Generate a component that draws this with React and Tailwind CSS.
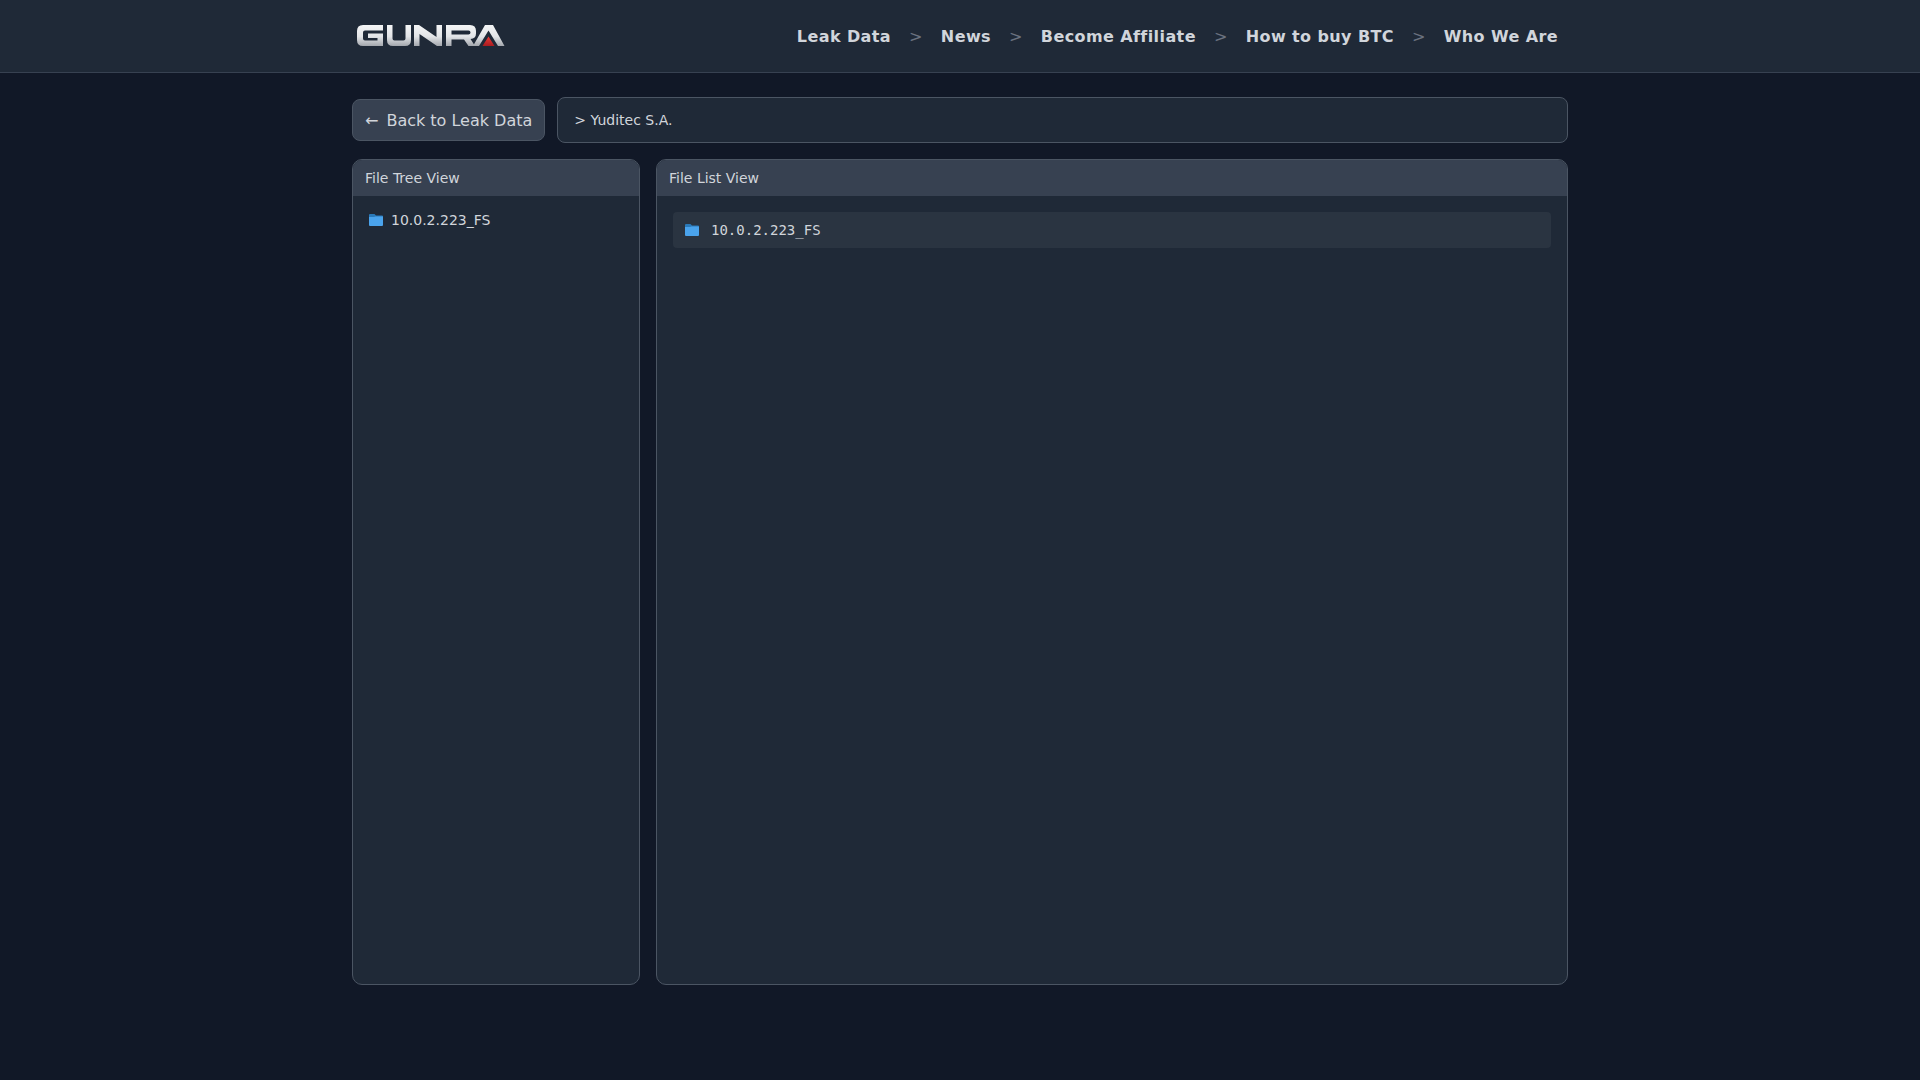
const F = "font-['DejaVu_Sans',sans-serif]";

function Logo() {
  return (
    <svg width="150" height="24" viewBox="0 0 150 24" className="block" aria-label="GUNRA">
      <defs>
        <linearGradient id="lg" x1="0" y1="0" x2="0" y2="1">
          <stop offset="0" stopColor="#f4f5f6" />
          <stop offset="0.55" stopColor="#e2e4e7" />
          <stop offset="1" stopColor="#a3a7ad" />
        </linearGradient>
        <linearGradient id="lr" x1="0" y1="0" x2="0" y2="1">
          <stop offset="0" stopColor="#ee3a36" />
          <stop offset="1" stopColor="#a81c20" />
        </linearGradient>
      </defs>
      <g fill="url(#lg)">
        <path d="M6 1H26V6.500H8Q6 6.500 6 8.500V14.500Q6 16.500 8 16.500H20.500V14H11V9.500H26V22H6Q0 22 0 16V7Q0 1 6 1Z" />
        <path d="M30 1H35.500V14.500Q35.500 16.500 37.500 16.500H46.500Q48.500 16.500 48.500 14.500V1H54V16Q54 22 48 22H36Q30 22 30 16Z" />
        <path d="M57 1H62L79.500 13V1H85V22H80L62.500 10V22H57Z" />
        <path fillRule="evenodd" d="M89 1H113Q119 1 119 7V9.500Q119 14.500 113.500 15L118 22H111.500L107 15.500H94.500V22H89ZM94.500 6.500V10.500H111.500Q113.500 10.500 113.500 8.500Q113.500 6.500 111.500 6.500Z" />
        <path d="M128 1H136L147.500 22H141L131.500 6.500L122 22H116Z" />
      </g>
      <path d="M131.500 12.500L137.500 22H125.500Z" fill="url(#lr)" />
    </svg>
  );
}

function FolderIcon({ className = "" }) {
  return (
    <svg width="14" height="12" viewBox="0 0 14 12" className={`block shrink-0 ${className}`}>
      <path d="M0 1Q0 0 1 0H5.500L7 1.500H13Q14 1.500 14 2.500V4H0Z" fill="#2a79b8" />
      <path d="M0 3H5L6.500 2.500H14V11Q14 12 13 12H1Q0 12 0 11Z" fill="#4aa3ec" />
    </svg>
  );
}

function Panel({ title, className, children }) {
  return (
    <section className={`flex flex-col overflow-hidden rounded-[10px] border border-[#4b5563] bg-[#1f2937] ${className}`}>
      <header className="flex h-9 items-center bg-[#374151] px-3 text-[14px] text-[#d1d5db]">{title}</header>
      {children}
    </section>
  );
}

export default function App() {
  const nav = ["Leak Data", "News", "Become Affiliate", "How to buy BTC", "Who We Are"];
  return (
    <div className={`min-h-[1080px] bg-[#111827] ${F}`}>
      <header className="h-[73px] border-b border-[#374151] bg-[#1f2937]">
        <div className="mx-auto flex h-full w-[1216px] items-center justify-between pl-[5px] pr-[10px]">
          <Logo />
          <nav className="flex items-center gap-[18px] pt-[2px] text-[16px] font-bold tracking-[0.4px] text-[#d1d5db]">
            {nav.map((n, i) => (
              <div key={n} className="flex items-center gap-[18px]">
                {i > 0 && <span className="font-normal text-[#6b7280]">&gt;</span>}
                <span>{n}</span>
              </div>
            ))}
          </nav>
        </div>
      </header>
      <main className="mx-auto w-[1216px] pt-6">
        <div className="flex items-center gap-3">
          <div className="flex h-[42px] items-center gap-2 rounded-lg border border-[#4b5563] bg-[#374151] px-3 pt-[2px] text-[16px] text-[#d1d5db]">
            <span>←</span>
            <span>Back to Leak Data</span>
          </div>
          <div className="flex h-[46px] flex-1 items-center rounded-lg border border-[#4b5563] bg-[#1f2937] px-4 text-[14px] text-[#d1d5db]">
            &gt; Yuditec S.A.
          </div>
        </div>
        <div className="mt-4 flex h-[826px] gap-4">
          <Panel title="File Tree View" className="w-[288px]">
            <div className="flex items-center gap-2 px-4 pt-[14px] text-[14px] text-[#d1d5db]">
              <FolderIcon className="-translate-y-px" />
              <span>10.0.2.223_FS</span>
            </div>
          </Panel>
          <Panel title="File List View" className="flex-1">
            <div className="p-4">
              <div className="flex h-9 items-center gap-3 rounded bg-[#2a3441] px-3 font-['DejaVu_Sans_Mono',monospace] text-[14px] text-[#d1d5db]">
                <FolderIcon />
                <span>10.0.2.223_FS</span>
              </div>
            </div>
          </Panel>
        </div>
      </main>
    </div>
  );
}
